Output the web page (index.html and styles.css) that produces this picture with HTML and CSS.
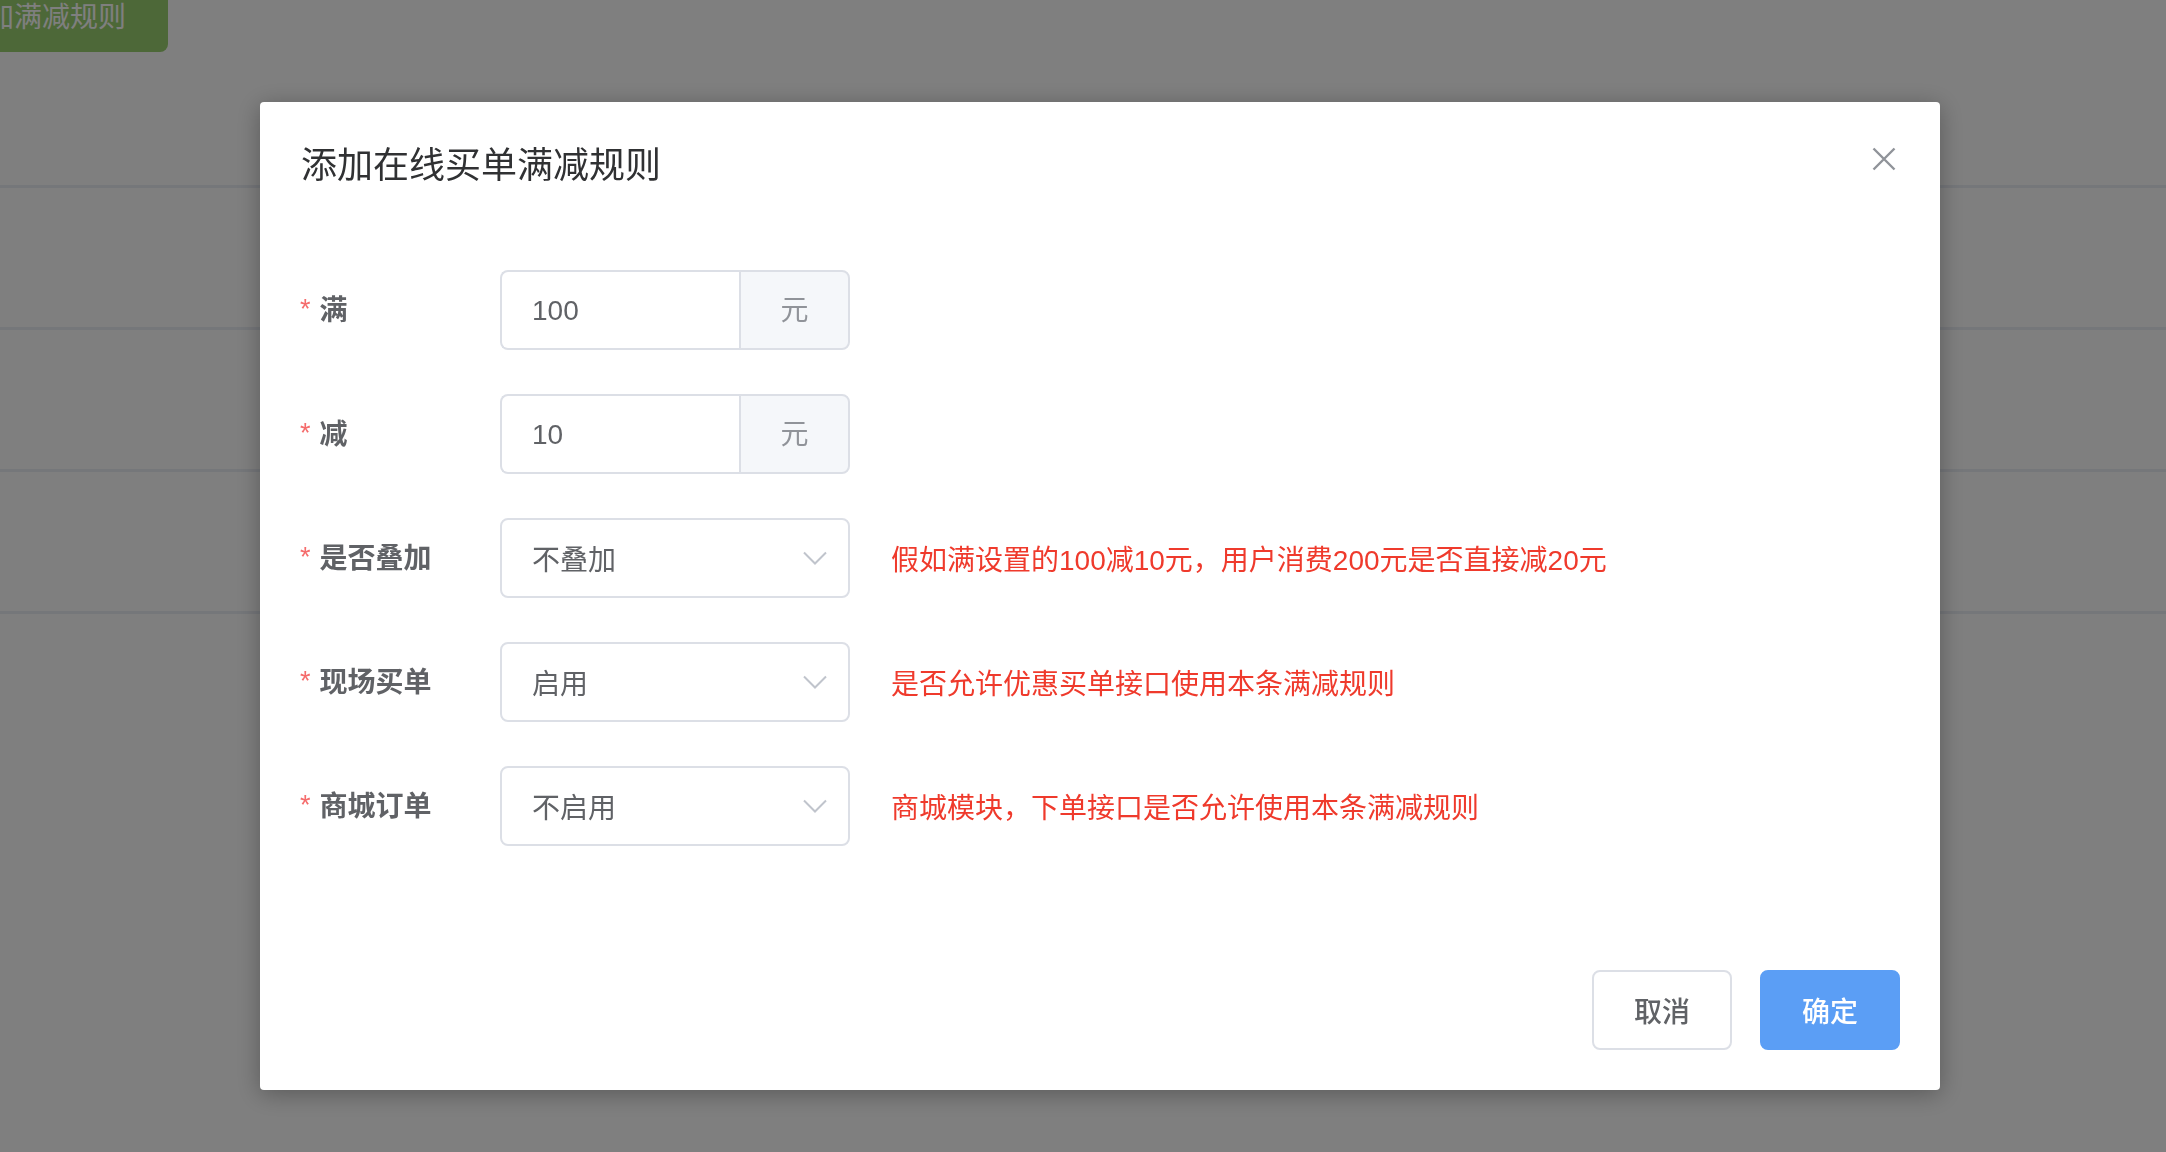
FILE: index.html
```html
<!DOCTYPE html>
<html lang="zh-CN">
<head>
<meta charset="utf-8">
<title>添加在线买单满减规则</title>
<link rel="stylesheet" href="styles.css">
</head>
<body>
<div class="page">
  <div class="toolbar">
    <button class="btn-success">添加满减规则</button>
  </div>
  <div class="table">
    <div class="row"></div>
    <div class="row"></div>
    <div class="row"></div>
    <div class="row"></div>
  </div>
</div>

<div class="overlay">
  <div class="dialog">
    <div class="dialog-header">
      <span class="dialog-title">添加在线买单满减规则</span>
      <button class="dialog-close" aria-label="关闭">
        <svg width="32" height="32" viewBox="0 0 32 32"><path d="M5.5 5.5 L26.5 26.5 M26.5 5.5 L5.5 26.5" stroke="#909399" stroke-width="2.4" fill="none"/></svg>
      </button>
    </div>
    <div class="dialog-body">
      <div class="form-item">
        <label class="form-label"><span class="req">*</span>满</label>
        <div class="form-content">
          <div class="input-group">
            <div class="input">100</div>
            <div class="append">元</div>
          </div>
        </div>
      </div>
      <div class="form-item">
        <label class="form-label"><span class="req">*</span>减</label>
        <div class="form-content">
          <div class="input-group">
            <div class="input">10</div>
            <div class="append">元</div>
          </div>
        </div>
      </div>
      <div class="form-item">
        <label class="form-label"><span class="req">*</span>是否叠加</label>
        <div class="form-content">
          <div class="select">
            <span class="select-value">不叠加</span>
            <svg class="arrow" width="24" height="14" viewBox="0 0 24 14"><path d="M1 1.5 L12 12.5 L23 1.5" stroke="#c0c4cc" stroke-width="2" fill="none"/></svg>
          </div>
          <span class="tip">假如满设置的100减10元，用户消费200元是否直接减20元</span>
        </div>
      </div>
      <div class="form-item">
        <label class="form-label"><span class="req">*</span>现场买单</label>
        <div class="form-content">
          <div class="select">
            <span class="select-value">启用</span>
            <svg class="arrow" width="24" height="14" viewBox="0 0 24 14"><path d="M1 1.5 L12 12.5 L23 1.5" stroke="#c0c4cc" stroke-width="2" fill="none"/></svg>
          </div>
          <span class="tip">是否允许优惠买单接口使用本条满减规则</span>
        </div>
      </div>
      <div class="form-item">
        <label class="form-label"><span class="req">*</span>商城订单</label>
        <div class="form-content">
          <div class="select">
            <span class="select-value">不启用</span>
            <svg class="arrow" width="24" height="14" viewBox="0 0 24 14"><path d="M1 1.5 L12 12.5 L23 1.5" stroke="#c0c4cc" stroke-width="2" fill="none"/></svg>
          </div>
          <span class="tip">商城模块，下单接口是否允许使用本条满减规则</span>
        </div>
      </div>
    </div>
    <div class="dialog-footer">
      <button class="btn">取消</button>
      <button class="btn btn-primary">确定</button>
    </div>
  </div>
</div>
</body>
</html>
```

FILE: styles.css
```css
* { box-sizing: border-box; }

html, body {
  margin: 0;
  padding: 0;
  background: #ffffff;
  font-family: "Liberation Sans", "Noto Sans CJK SC", sans-serif;
  overflow: hidden;
}

.page {
  width: 2166px;
  height: 1152px;
}

.toolbar {
  height: 52px;
  overflow: hidden;
}

.btn-success {
  display: block;
  margin: -24px 0 0 -82px;
  height: 76px;
  padding: 7px 42px 0 40px;
  border: none;
  border-radius: 8px;
  background: #9ad070;
  color: #ffffff;
  font-family: "Liberation Sans", "Noto Sans CJK SC", sans-serif;
  font-size: 28px;
  line-height: 69px;
}

.table {
  padding-top: 133px;
}

.row {
  height: 142px;
  border-top: 3px solid #ebeef5;
}

.overlay {
  position: fixed;
  inset: 0;
  background: rgba(0, 0, 0, 0.5);
  display: flex;
  align-items: flex-start;
}

.dialog {
  margin: 102px 0 0 260px;
  width: 1680px;
  background: #ffffff;
  border-radius: 4px;
  box-shadow: 0 4px 24px rgba(0, 0, 0, 0.3);
}

.dialog-header {
  display: flex;
  justify-content: space-between;
  align-items: flex-start;
  padding: 40px 40px 20px 41px;
}

.dialog-title {
  font-size: 36px;
  line-height: 48px;
  color: #303133;
}

.dialog-close {
  width: 32px;
  height: 32px;
  padding: 0;
  border: none;
  background: none;
  display: flex;
  margin-top: 1px;
}

.dialog-body {
  padding: 60px 40px;
}

.form-item {
  display: flex;
  height: 80px;
  margin-bottom: 44px;
}

.form-label {
  width: 200px;
  flex: none;
  font-size: 28px;
  line-height: 80px;
  font-weight: 700;
  color: #606266;
  display: flex;
  align-items: center;
  padding-top: 2px;
}

.req {
  color: #f56c6c;
  margin-right: 9px;
  font-size: 27px;
  font-weight: 400;
  margin-top: -4px;
}

.form-content {
  display: flex;
  align-items: center;
}

.input-group {
  display: flex;
  width: 350px;
  height: 80px;
}

.input {
  flex: 1;
  border: 2px solid #dcdfe6;
  border-right: none;
  border-radius: 8px 0 0 8px;
  padding: 0 30px;
  font-size: 28px;
  line-height: 78px;
  color: #606266;
}

.append {
  width: 111px;
  border: 2px solid #dcdfe6;
  border-radius: 0 8px 8px 0;
  background: #f5f7fa;
  color: #909399;
  font-size: 28px;
  line-height: 78px;
  text-align: center;
}

.select {
  width: 350px;
  height: 80px;
  border: 2px solid #dcdfe6;
  border-radius: 8px;
  display: flex;
  align-items: center;
  justify-content: space-between;
  padding: 0 21px 0 30px;
}

.select-value {
  font-size: 28px;
  color: #606266;
}

.arrow {
  display: block;
  margin-top: 0;
}

.tip {
  margin-left: 41px;
  font-size: 28px;
  color: #ef3a2c;
  white-space: nowrap;
}

.dialog-footer {
  display: flex;
  justify-content: flex-end;
  gap: 28px;
  padding: 20px 40px 40px;
}

.btn {
  width: 140px;
  height: 80px;
  border: 2px solid #dcdfe6;
  border-radius: 8px;
  background: #ffffff;
  color: #606266;
  font-family: "Liberation Sans", "Noto Sans CJK SC", sans-serif;
  font-size: 28px;
  font-weight: 500;
  padding: 0;
}

.btn-primary {
  background: #5b9ef5;
  border-color: #5b9ef5;
  color: #ffffff;
}
```
